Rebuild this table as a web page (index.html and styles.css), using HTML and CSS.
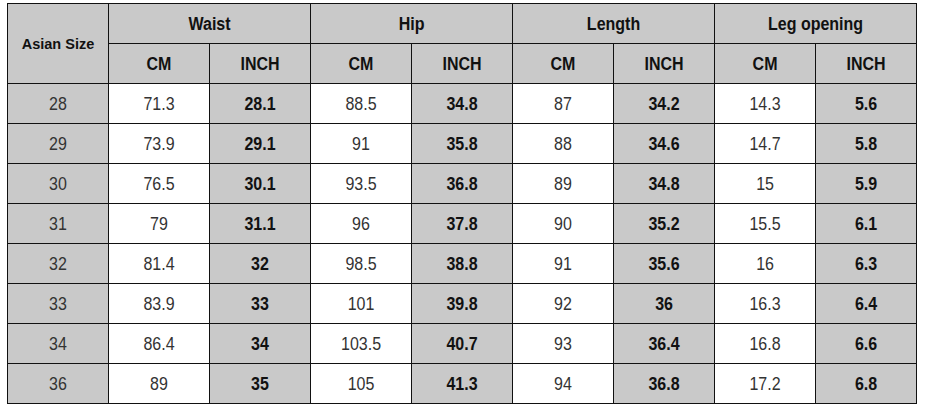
FILE: index.html
```html
<!DOCTYPE html>
<html>
<head>
<meta charset="utf-8">
<link rel="stylesheet" href="styles.css">
</head>
<body>
<table class="size-table">
  <colgroup>
    <col class="c"><col class="c"><col class="c"><col class="c"><col class="c"><col class="c"><col class="c"><col class="c"><col class="c">
  </colgroup>
  <thead>
    <tr>
      <th rowspan="2" class="asian">Asian Size</th>
      <th colspan="2" class="grp"><span class="t">Waist</span></th>
      <th colspan="2" class="grp"><span class="t">Hip</span></th>
      <th colspan="2" class="grp"><span class="t">Length</span></th>
      <th colspan="2" class="grp"><span class="t">Leg opening</span></th>
    </tr>
    <tr>
      <th class="unit"><span class="t">CM</span></th><th class="unit"><span class="t">INCH</span></th>
      <th class="unit"><span class="t">CM</span></th><th class="unit"><span class="t">INCH</span></th>
      <th class="unit"><span class="t">CM</span></th><th class="unit"><span class="t">INCH</span></th>
      <th class="unit"><span class="t">CM</span></th><th class="unit"><span class="t">INCH</span></th>
    </tr>
  </thead>
  <tbody>
    <tr><td class="size"><span class="t">28</span></td><td class="cm"><span class="t">71.3</span></td><td class="in"><span class="t">28.1</span></td><td class="cm"><span class="t">88.5</span></td><td class="in"><span class="t">34.8</span></td><td class="cm"><span class="t">87</span></td><td class="in"><span class="t">34.2</span></td><td class="cm"><span class="t">14.3</span></td><td class="in"><span class="t">5.6</span></td></tr>
    <tr><td class="size"><span class="t">29</span></td><td class="cm"><span class="t">73.9</span></td><td class="in"><span class="t">29.1</span></td><td class="cm"><span class="t">91</span></td><td class="in"><span class="t">35.8</span></td><td class="cm"><span class="t">88</span></td><td class="in"><span class="t">34.6</span></td><td class="cm"><span class="t">14.7</span></td><td class="in"><span class="t">5.8</span></td></tr>
    <tr><td class="size"><span class="t">30</span></td><td class="cm"><span class="t">76.5</span></td><td class="in"><span class="t">30.1</span></td><td class="cm"><span class="t">93.5</span></td><td class="in"><span class="t">36.8</span></td><td class="cm"><span class="t">89</span></td><td class="in"><span class="t">34.8</span></td><td class="cm"><span class="t">15</span></td><td class="in"><span class="t">5.9</span></td></tr>
    <tr><td class="size"><span class="t">31</span></td><td class="cm"><span class="t">79</span></td><td class="in"><span class="t">31.1</span></td><td class="cm"><span class="t">96</span></td><td class="in"><span class="t">37.8</span></td><td class="cm"><span class="t">90</span></td><td class="in"><span class="t">35.2</span></td><td class="cm"><span class="t">15.5</span></td><td class="in"><span class="t">6.1</span></td></tr>
    <tr><td class="size"><span class="t">32</span></td><td class="cm"><span class="t">81.4</span></td><td class="in"><span class="t">32</span></td><td class="cm"><span class="t">98.5</span></td><td class="in"><span class="t">38.8</span></td><td class="cm"><span class="t">91</span></td><td class="in"><span class="t">35.6</span></td><td class="cm"><span class="t">16</span></td><td class="in"><span class="t">6.3</span></td></tr>
    <tr><td class="size"><span class="t">33</span></td><td class="cm"><span class="t">83.9</span></td><td class="in"><span class="t">33</span></td><td class="cm"><span class="t">101</span></td><td class="in"><span class="t">39.8</span></td><td class="cm"><span class="t">92</span></td><td class="in"><span class="t">36</span></td><td class="cm"><span class="t">16.3</span></td><td class="in"><span class="t">6.4</span></td></tr>
    <tr><td class="size"><span class="t">34</span></td><td class="cm"><span class="t">86.4</span></td><td class="in"><span class="t">34</span></td><td class="cm"><span class="t">103.5</span></td><td class="in"><span class="t">40.7</span></td><td class="cm"><span class="t">93</span></td><td class="in"><span class="t">36.4</span></td><td class="cm"><span class="t">16.8</span></td><td class="in"><span class="t">6.6</span></td></tr>
    <tr><td class="size"><span class="t">36</span></td><td class="cm"><span class="t">89</span></td><td class="in"><span class="t">35</span></td><td class="cm"><span class="t">105</span></td><td class="in"><span class="t">41.3</span></td><td class="cm"><span class="t">94</span></td><td class="in"><span class="t">36.8</span></td><td class="cm"><span class="t">17.2</span></td><td class="in"><span class="t">6.8</span></td></tr>
  </tbody>
</table>
</body>
</html>
```
FILE: styles.css
```css
html, body {
  margin: 0;
  padding: 0;
  background: #ffffff;
}
body {
  padding: 3px 0 0 7px;
  font-family: "Liberation Sans", Arial, sans-serif;
}
.size-table {
  border-collapse: collapse;
  table-layout: fixed;
  width: 910px;
}
.size-table col.c {
  width: 101px;
}
.size-table th,
.size-table td {
  border: 1px solid #111111;
  height: 39px;
  padding: 0;
  text-align: center;
  vertical-align: middle;
  background: #c9c9c9;
}
.size-table tr {
  height: 40px;
}
.t {
  display: inline-block;
  transform: scaleY(1.14);
}
.asian {
  font-size: 14.5px;
  font-weight: bold;
  color: #111;
}
.grp, .unit {
  font-size: 16px;
  font-weight: bold;
  color: #111;
}
.size {
  font-size: 16px;
  color: #333;
}
.size-table td.cm {
  background: #ffffff;
  font-size: 16px;
  color: #333;
}
.in {
  font-size: 16px;
  font-weight: bold;
  color: #111;
}
```
